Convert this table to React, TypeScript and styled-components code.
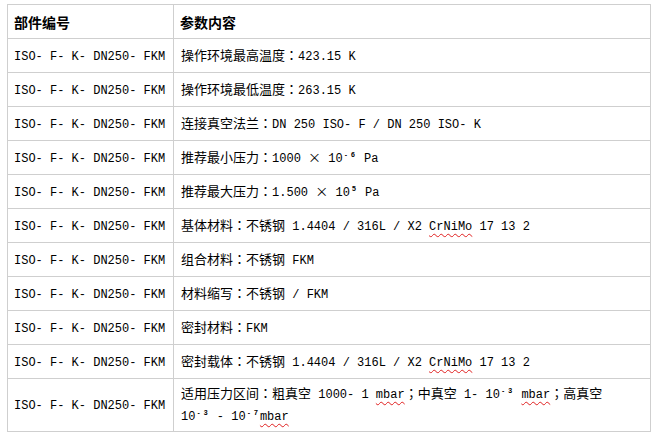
import { createGlobalStyle, styled } from "styled-components";

const GlobalStyle = createGlobalStyle`
  body {
    margin: 0;
    background: #fff;
    color: #000;
    font-family: "Noto Sans CJK SC", "DejaVu Sans", sans-serif;
  }
`;

const Page = styled.div`
  padding: 4px 0 0 7px;
`;

const Table = styled.table`
  border-collapse: collapse;
  width: 644px;
  table-layout: fixed;
`;

const HeadCell = styled.th`
  border: 1px solid #cfcfcf;
  height: 33px;
  padding: 0 6px;
  text-align: left;
  font: 700 14px/20px "Noto Sans CJK SC", sans-serif;
  &:first-child {
    width: 153px;
  }
`;

const Cell = styled.td<{ $tall?: boolean }>`
  border: 1px solid #cfcfcf;
  height: ${(p) => (p.$tall ? 52 : 33)}px;
  padding: 0 6px;
  vertical-align: middle;
  font: 400 13px/20px "Noto Sans CJK SC", sans-serif;
  white-space: nowrap;
  &:last-child {
    padding-left: 7px;
  }
`;

const Latin = styled.span`
  font: 400 12px/20px "Liberation Mono", monospace;
  white-space: pre;
`;

// centred full-width punctuation, as in the reference font
const Punct = styled.span`
  font-family: "Noto Sans CJK TC", sans-serif;
`;

const Sup = styled.span`
  font: 700 7px "Liberation Sans", sans-serif;
  vertical-align: 5px;
  margin: 0 2px;
`;

const Typo = styled.span`
  text-decoration: underline wavy #e02020;
  text-decoration-thickness: 1px;
  text-underline-offset: 3px;
`;

const Line = styled.div`
  display: block;
`;

const CODE = "ISO- F- K- DN250- FKM";

const Colon = () => <Punct>：</Punct>;
const Semi = () => <Punct>；</Punct>;
const Minus = () => <Sup>-</Sup>;

const rows: React.ReactNode[] = [
  <>操作环境最高温度<Colon /><Latin>423.15 K</Latin></>,
  <>操作环境最低温度<Colon /><Latin>263.15 K</Latin></>,
  <>连接真空法兰<Colon /><Latin>DN 250 ISO- F / DN 250 ISO- K</Latin></>,
  <>
    推荐最小压力<Colon /><Latin>1000 </Latin>×<Latin> 10</Latin><Minus />
    <Sup>6</Sup><Latin> Pa</Latin>
  </>,
  <>
    推荐最大压力<Colon /><Latin>1.500 </Latin>×<Latin> 10</Latin><Sup>5</Sup>
    <Latin> Pa</Latin>
  </>,
  <>
    基体材料<Colon />不锈钢<Latin> 1.4404 / 316L / X2 <Typo>CrNiMo</Typo> 17 13 2</Latin>
  </>,
  <>组合材料<Colon />不锈钢<Latin> FKM</Latin></>,
  <>材料缩写<Colon />不锈钢<Latin> / FKM</Latin></>,
  <>密封材料<Colon /><Latin>FKM</Latin></>,
  <>
    密封载体<Colon />不锈钢<Latin> 1.4404 / 316L / X2 <Typo>CrNiMo</Typo> 17 13 2</Latin>
  </>,
];

export default function App() {
  return (
    <Page>
      <GlobalStyle />
      <Table>
        <thead>
          <tr>
            <HeadCell>部件编号</HeadCell>
            <HeadCell>参数内容</HeadCell>
          </tr>
        </thead>
        <tbody>
          {rows.map((content, i) => (
            <tr key={i}>
              <Cell>
                <Latin>{CODE}</Latin>
              </Cell>
              <Cell>{content}</Cell>
            </tr>
          ))}
          <tr>
            <Cell $tall>
              <Latin>{CODE}</Latin>
            </Cell>
            <Cell $tall>
              <Line>
                适用压力区间<Colon />粗真空<Latin> 1000- 1 <Typo>mbar</Typo></Latin>
                <Semi />中真空<Latin> 1- 10</Latin><Minus /><Sup>3</Sup>
                <Latin> <Typo>mbar</Typo></Latin><Semi />高真空
              </Line>
              <Line>
                <Latin>10</Latin><Minus /><Sup>3</Sup>
                <Latin> - 10</Latin><Minus /><Sup>7</Sup>
                <Latin><Typo>mbar</Typo></Latin>
              </Line>
            </Cell>
          </tr>
        </tbody>
      </Table>
    </Page>
  );
}
